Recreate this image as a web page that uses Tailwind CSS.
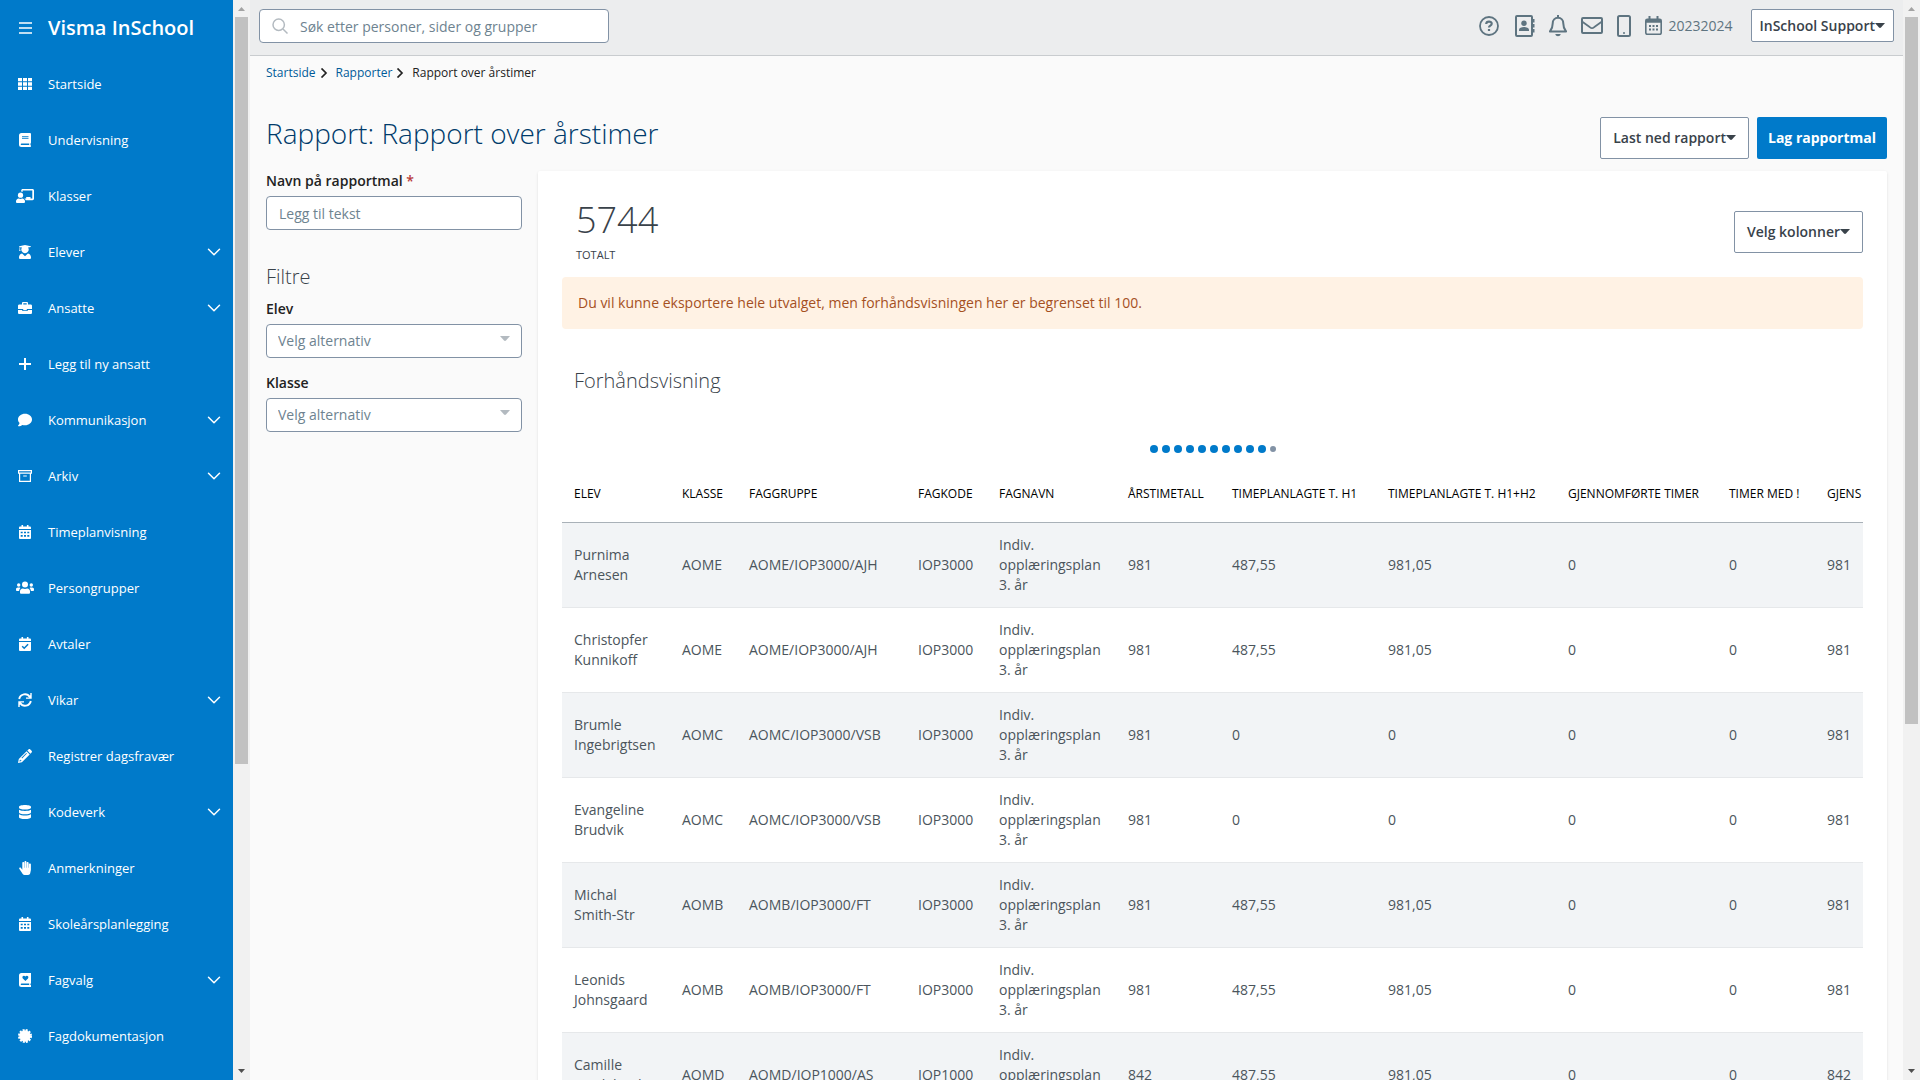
<!DOCTYPE html>
<html lang="nb">
<head>
    <meta charset="UTF-8">
    <meta name="viewport" content="width=device-width, initial-scale=1.0">
    <title>Rapport over årstimer - Visma InSchool</title>
    <script src="https://cdn.jsdelivr.net/npm/@tailwindcss/browser@4"></script>
</head>
<body class="h-screen overflow-hidden flex bg-[#fafafa] font-['Open_Sans',sans-serif] text-sm text-[#39424a]">

    <!-- Ikoner -->
    <svg class="hidden">
        <symbol id="grid" viewBox="0 0 14 14"><path d="M0 1h4v3.3H0zM5 1h4v3.3H5zM10 1h4v3.3h-4zM0 5.3h4v3.4H0zM5 5.3h4v3.4H5zM10 5.3h4v3.4h-4zM0 9.7h4V13H0zM5 9.7h4V13H5zM10 9.7h4V13h-4z"/></symbol>
        <symbol id="book" viewBox="0 0 14 14"><path fill-rule="evenodd" d="M3.5 0H12a1 1 0 0 1 1 1v8.500c0 .4-.2.700-.5.900-.1.500-.1 1.200 0 1.700.3.300.5.500.5.900 0 .6-.4 1-1 1H3.500A2.500 2.500 0 0 1 1 11.500v-9A2.500 2.500 0 0 1 3.500 0zM4 3.300v.9h6.500v-.9zM4 5.200v.9h6.500v-.9zM3.500 10.400c-1 0-1 1.700 0 1.700h7.700v-1.700z"/></symbol>
        <symbol id="teacher" viewBox="0 0 18 14"><path d="M16.500 0H6.700C5.900 0 5.200.7 5.200 1.500v1c.5.1 1 .3 1.400.600V1.500h9.700v8.100h-1.800V8h-4.300v1.600H8.300c.7.400 1.200 1 1.500 1.600h6.700c.8 0 1.500-.7 1.500-1.600V1.500C18 .7 17.300 0 16.500 0z"/><circle cx="4.500" cy="6.200" r="2.600"/><path d="M6.300 9.600c-1.200.4-2.400.4-3.600 0C1.200 9.700 0 10.900 0 12.500v.6c0 .5.4.9.900.900h7.200c.5 0 .9-.4.900-.9v-.6c0-1.600-1.200-2.800-2.700-2.900z"/></symbol>
        <symbol id="student" viewBox="0 0 14 14"><path d="M7 0 1.300 1.200c-.4.100-.4.700 0 .8l.3.100V3.600c-.3.200-.3.600 0 .8L1.100 6h1.500l-.5-1.600c.3-.2.300-.6 0-.8V2.200L4 2.600a3.600 3.600 0 1 0 6 0l2.700-.600c.4-.1.400-.7 0-.8zM9.900 8.600 7 11.200 4.100 8.600C2.400 9 1 10.500 1 12.300v.4c0 .7.600 1.300 1.300 1.300h9.400c.7 0 1.300-.6 1.300-1.300v-.4c0-1.800-1.400-3.300-3.100-3.700z"/></symbol>
        <symbol id="briefcase" viewBox="0 0 14 14"><path fill-rule="evenodd" d="M5.200 1C4.500 1 4 1.500 4 2.200v1.300H1.300C.6 3.500 0 4.100 0 4.800V8h5.200v1.200h3.600V8H14V4.800c0-.7-.6-1.300-1.300-1.300H10V2.200C10 1.500 9.500 1 8.800 1zm.1 1.300h3.400v1.200H5.300z"/><path d="M0 8.900v2.800c0 .7.600 1.300 1.300 1.300h11.400c.7 0 1.300-.6 1.300-1.300V8.900H9.700v1.200H4.300V8.900z"/></symbol>
        <symbol id="plus" viewBox="0 0 14 14"><path d="M6 1h2v5h5v2H8v5H6V8H1V6h5z"/></symbol>
        <symbol id="comment" viewBox="0 0 14 14"><path d="M7 .8c-3.900 0-7 2.600-7 5.700 0 1.400.6 2.600 1.600 3.600-.3 1.100-1 1.900-1.500 2.500-.2.200 0 .6.300.6 1.700 0 3-.7 3.900-1.300.8.300 1.700.4 2.700.4 3.900 0 7-2.600 7-5.800S10.900.8 7 .8z"/></symbol>
        <symbol id="archive" viewBox="0 0 14 14"><path fill="none" stroke="currentColor" stroke-width="1.200" d="M.6 1.600h12.800v2.600H.6zM1.600 4.200h10.800v8.200H1.600zM5.200 7h3.600"/></symbol>
        <symbol id="calendar" viewBox="0 0 14 14"><path d="M1 4V2.700c0-.6.5-1.100 1.200-1.100h1.300V0h1.600v1.600h3.800V0h1.600v1.600h1.300c.7 0 1.200.5 1.200 1.100V4z"/><path fill-rule="evenodd" d="M1 4.900h12v7.800c0 .7-.5 1.300-1.200 1.300H2.200C1.500 14 1 13.400 1 12.700zM2.700 6.700v1.600h2V6.700zm3.300 0v1.600h2V6.700zm3.300 0v1.600h2V6.700zM2.700 10v1.700h2V10zM6 10v1.700h2V10zm3.300 0v1.700h2V10z"/></symbol>
        <symbol id="check" viewBox="0 0 14 14"><path d="M1 4V2.700c0-.6.500-1.100 1.200-1.100h1.300V0h1.600v1.600h3.800V0h1.600v1.600h1.300c.7 0 1.200.5 1.200 1.100V4zM1 4.900h12v7.800c0 .7-.5 1.300-1.200 1.300H2.200C1.500 14 1 13.400 1 12.700z"/><path fill="none" stroke="#007aca" stroke-width="1.500" d="m4.200 9.300 2 2 3.900-4"/></symbol>
        <symbol id="users" viewBox="0 0 18 14"><circle cx="9" cy="3.500" r="3"/><circle cx="2.700" cy="4" r="1.700"/><circle cx="15.300" cy="4" r="1.700"/><path d="M11.200 7.500c-1.400.6-3 .6-4.400 0C5 7.500 4 8.900 4 10.500v1c0 .8.500 1.300 1.300 1.300h7.400c.8 0 1.300-.5 1.300-1.300v-1c0-1.600-1-3-2.800-3zM4.400 7c-.4-.3-.7-.4-1.100-.4H1.800C.8 6.600 0 7.400 0 8.400v.9c0 .5.400.7.900.7h2.200c.1-1.200.6-2.200 1.300-3zM13.600 7c.4-.3.700-.4 1.100-.4h1.500c1 0 1.800.8 1.800 1.800v.9c0 .5-.4.700-.9.700h-2.200c-.1-1.200-.6-2.200-1.300-3z"/></symbol>
        <symbol id="sync" viewBox="0 0 14 14"><path fill="none" stroke="currentColor" stroke-width="1.900" d="M1.200 6A5.800 5.800 0 0 1 11.800 4M12.800 8A5.800 5.800 0 0 1 2.200 10"/><path d="M13.700 0v5.700H8V4.500h3L12.300 2V0zM.3 14V8.300H6v1.200H3L1.700 12v2z"/></symbol>
        <symbol id="pencil" viewBox="0 0 14 14"><path fill-rule="evenodd" d="m8.600 2.300 3.100 3.100-7.800 7.800L0 14l.8-3.900zM8.300 4 3.500 8.800l.6.600 4.800-4.800zM1.900 10.700l-.5 1.900 1.900-.5v-.9h-.9v-.5z"/><path d="m9.300 1.600 1.200-1.200c.5-.5 1.300-.5 1.800 0l1.300 1.300c.5.500.5 1.300 0 1.800l-1.200 1.200z"/></symbol>
        <symbol id="database" viewBox="0 0 14 14"><path d="M1 1.800C1 .8 3.700 0 7 0s6 .8 6 1.800v1C13 3.800 10.300 4.600 7 4.600S1 3.800 1 2.800zM1 4.700c1.300.8 3.600 1.200 6 1.200s4.700-.4 6-1.200v2.700c0 1-2.700 1.800-6 1.800S1 8.400 1 7.400zM1 9.300c1.300.9 3.600 1.200 6 1.200s4.700-.3 6-1.200v2.900c0 1-2.700 1.800-6 1.800s-6-.8-6-1.800z"/></symbol>
        <symbol id="hand" viewBox="0 0 14 14"><path d="M11.900 2.600c-.6 0-1 .4-1 1V6.700h-.3V1.900c0-1.300-1.900-1.300-1.900 0v4.800h-.3V1c0-1.300-1.900-1.300-1.900 0v5.700h-.3V1.900c0-1.300-1.900-1.300-1.900 0v6.800L3 7C2.200 5.900.6 7 1.400 8.100l3.300 4.900c.5.700 1.100 1 1.900 1h3.500c1 0 1.900-.7 2.100-1.700l.7-3.300V3.600c0-.6-.4-1-1-1z"/></symbol>
        <symbol id="heartbook" viewBox="0 0 14 14"><path fill-rule="evenodd" d="M3.500 0H13v10.400h-.6v1.700h.6V14H3.500A2.500 2.500 0 0 1 1 11.500v-9A2.500 2.500 0 0 1 3.500 0zM7.400 8 4.800 5.400C3.500 3.800 5.700 1.700 7.400 3.500c1.700-1.800 3.900.3 2.600 1.900zM3.500 10.400c-1 0-1 1.700 0 1.700h7.700v-1.700z"/></symbol>
        <symbol id="badge" viewBox="0 0 14 14"><circle cx="7" cy="7" r="5.700"/><circle cx="7" cy="7" r="6" fill="none" stroke="currentColor" stroke-width="2" stroke-dasharray="2 1.140"/></symbol>
        <symbol id="chevron" viewBox="0 0 14 8"><path fill="none" stroke="currentColor" stroke-width="1.500" stroke-linecap="round" stroke-linejoin="round" d="m1.500 1.200 5.500 5.500 5.500-5.500"/></symbol>
        <symbol id="caret" viewBox="0 0 10 6"><path d="M0 0h10L6 4.600q-1 .9-2 0z"/></symbol>
        <symbol id="arrow" viewBox="0 0 8 10"><path fill="none" stroke="#222" stroke-width="1.700" d="m1.500 .5 4.500 4.500-4.500 4.500"/></symbol>
    </svg>

    <!-- Venstremeny -->
    <aside class="w-[233px] shrink-0 bg-[#007aca] text-white">
        <div class="h-14 pl-[19px] flex items-center gap-4">
            <button type="button" aria-label="Meny"><svg class="w-[13px] h-3" viewBox="0 0 13 12"><path stroke="#fff" stroke-width="1.500" d="M0 1h13M0 6h13M0 11h13"/></svg></button>
            <span class="text-xl font-semibold">Visma InSchool</span>
        </div>
        <nav id="meny"></nav>
    </aside>

    <!-- Rullefelt for menyen -->
    <div class="w-[17px] shrink-0 bg-[#f1f1f1] flex flex-col items-center">
        <svg class="w-[17px] h-[17px] shrink-0" viewBox="0 0 17 17"><path fill="#a3a3a3" d="m8.500 7 3.500 4H5z"/></svg>
        <div class="w-[13px] h-[747px] bg-[#c1c1c1]"></div>
        <svg class="w-[17px] h-[17px] mt-auto shrink-0" viewBox="0 0 17 17"><path fill="#505050" d="M5 6h7l-3.500 4z"/></svg>
    </div>

    <div class="flex-1 min-w-0 flex flex-col">
        <!-- Topplinje -->
        <header class="h-14 shrink-0 flex items-start justify-between pl-[9px] pr-[9px] pt-[9px] bg-[#ecedee] border-b border-[#c9cccf]">
            <label class="w-[350px] h-[34px] flex items-center gap-3 pl-3 bg-white border border-[#8292a5] rounded">
                <svg class="w-4 h-4" viewBox="0 0 16 16" fill="none" stroke="#b3bac0" stroke-width="1.500"><circle cx="6.700" cy="6.700" r="5.700"/><path d="m11 11 4.500 4.500"/></svg>
                <input type="text" aria-label="Søk" placeholder="Søk etter personer, sider og grupper" class="flex-1 pt-0.5 outline-none placeholder:text-[#6e8390]">
            </label>
            <div class="flex items-center gap-3.5 text-[#5e7480]">
                <button type="button" aria-label="Hjelp" class="mr-0.5"><svg class="w-5 h-5" viewBox="0 0 20 20" fill="none" stroke="currentColor" stroke-width="1.800"><circle cx="10" cy="10" r="9"/><path stroke-width="2.200" d="M7.200 8c.2-3.300 5.600-3 5.500-.2 0 1.900-2.700 1.800-2.700 3.700M10 13v2"/></svg></button>
                <button type="button" aria-label="Kontakter"><svg class="w-5 h-[22px]" viewBox="0 0 20 22"><path fill="none" stroke="currentColor" stroke-width="2" d="M2 1h14a1 1 0 0 1 1 1v18a1 1 0 0 1-1 1H2a1 1 0 0 1-1-1V2a1 1 0 0 1 1-1z"/><circle cx="9" cy="8.300" r="2.700" fill="currentColor"/><path fill="currentColor" d="M4 16v-1.300c0-3.600 10-3.600 10 0V16zM18 4h1.500v3.500H18zm0 5h1.500v3.500H18zm0 5h1.500v3.500H18z"/></svg></button>
                <button type="button" aria-label="Varsler"><svg class="w-[18px] h-[22px]" viewBox="0 0 18 22" fill="none" stroke="currentColor" stroke-width="2" stroke-linejoin="round"><path d="M9 0v3M9 2.800c-3.200 0-5.300 2.500-5.300 5.600 0 4.400-1.400 6-2.800 8.100h16.200c-1.400-2.100-2.800-3.700-2.800-8.100 0-3.100-2.100-5.600-5.300-5.600z"/><path fill="currentColor" stroke="none" d="M6.300 19h5.400c-.4 3-5 3-5.400 0z"/></svg></button>
                <button type="button" aria-label="Meldinger"><svg class="w-[22px] h-[17px]" viewBox="0 0 22 17" fill="none" stroke="currentColor" stroke-width="2" stroke-linejoin="round"><rect x="1" y="1" width="20" height="15" rx="1"/><path stroke-width="1.700" d="m1 4.500 8 5.800c1.300 1 2.700 1 4 0l8-5.800"/></svg></button>
                <button type="button" aria-label="Mobil"><svg class="w-[14px] h-[22px]" viewBox="0 0 14 22"><rect x="1" y="1" width="12" height="20" rx="1.500" fill="none" stroke="currentColor" stroke-width="2"/><circle cx="7" cy="18" r="1" fill="currentColor"/></svg></button>
                <button type="button" class="flex items-center gap-1.5 mr-1">
                    <svg class="w-[17px] h-[19px]" viewBox="0 0 17 19"><rect x=".8" y="3.300" width="15.400" height="15" rx="1.500" fill="none" stroke="currentColor" stroke-width="1.600"/><path fill="currentColor" d="M1 3h2.500V0h2v3h6V0h2v3H16v3.700H1zM4 9h2v2H4zm3.500 0h2v2h-2zM11 9h2v2h-2zM4 12.500h2v2H4zm3.500 0h2v2h-2zm3.500 0h2v2h-2z"/></svg>
                    <span>20232024</span>
                </button>
                <button type="button" class="h-[33px] px-2 flex items-center bg-white border border-[#8292a5] rounded-xs font-semibold text-[#39424a]">InSchool Support<svg class="w-2.5 h-1.5 fill-current"><use href="#caret"/></svg></button>
            </div>
        </header>

        <main class="px-4">
            <nav aria-label="Brødsmuler" class="h-[34px] flex items-center text-xs">
                <a href="#" class="text-[#005b99]">Startside</a>
                <svg class="w-2 h-2.5 ml-1 mr-2"><use href="#arrow"/></svg>
                <a href="#" class="text-[#005b99]">Rapporter</a>
                <svg class="w-2 h-2.5 ml-1 mr-2"><use href="#arrow"/></svg>
                <span class="text-[#222]">Rapport over årstimer</span>
            </nav>

            <div class="h-[81px] pt-[14px] flex items-center justify-between">
                <h1 class="text-[28px] leading-8 pb-2.5 font-light text-[#003b6b]">Rapport: Rapport over årstimer</h1>
                <div class="flex gap-2">
                    <button type="button" class="h-[42px] px-3 flex items-center bg-white border border-[#8292a5] rounded-xs font-semibold">Last ned rapport<svg class="w-2.5 h-1.5 fill-current"><use href="#caret"/></svg></button>
                    <button type="button" class="h-[42px] px-[11px] bg-[#007aca] rounded-xs font-bold text-white">Lag rapportmal</button>
                </div>
            </div>

            <div class="flex items-start gap-4">
                <!-- Filtre -->
                <form class="w-64 shrink-0 text-[#222]">
                    <label for="navn" class="block h-[25px] leading-5 font-semibold">Navn på rapportmal <span class="text-[#b83a3a]">*</span></label>
                    <input id="navn" type="text" placeholder="Legg til tekst" class="block w-full h-[34px] px-3 bg-white border border-[#8292a5] rounded placeholder:text-[#6e8390]">
                    <h2 class="mt-[33px] mb-2 text-xl font-light text-[#39424a]">Filtre</h2>
                    <label for="elev" class="block h-[25px] leading-5 font-semibold">Elev</label>
                    <div class="relative">
                        <select id="elev" class="appearance-none w-full h-[34px] px-[11px] bg-white border border-[#8292a5] rounded text-[#6e8390]"><option>Velg alternativ</option></select>
                        <svg class="absolute right-3 top-3 w-2.5 h-1.5 fill-[#b3bac0] pointer-events-none"><use href="#caret"/></svg>
                    </div>
                    <label for="klasse" class="block h-[25px] mt-[15px] leading-5 font-semibold">Klasse</label>
                    <div class="relative">
                        <select id="klasse" class="appearance-none w-full h-[34px] px-[11px] bg-white border border-[#8292a5] rounded text-[#6e8390]"><option>Velg alternativ</option></select>
                        <svg class="absolute right-3 top-3 w-2.5 h-1.5 fill-[#b3bac0] pointer-events-none"><use href="#caret"/></svg>
                    </div>
                </form>

                <!-- Rapporten -->
                <section class="flex-1 min-w-0 px-6 pt-6 bg-white rounded-xs shadow">
                    <div class="h-[82px] pl-[14px] flex justify-between">
                        <div>
                            <div class="text-4xl leading-[50px] font-light">5744</div>
                            <div class="text-[11px] leading-5 text-[#39424a]">TOTALT</div>
                        </div>
                        <button type="button" class="h-[42px] mt-4 px-3 flex items-center bg-white border border-[#8292a5] rounded-xs font-semibold">Velg kolonner<svg class="w-2.5 h-1.5 fill-current"><use href="#caret"/></svg></button>
                    </div>
                    <p class="h-[52px] px-4 leading-[52px] bg-[#fff2e4] rounded text-[#a5501f]">Du vil kunne eksportere hele utvalget, men forhåndsvisningen her er begrenset til 100.</p>
                    <h2 class="mt-9 px-3 text-xl leading-8 font-light">Forhåndsvisning</h2>

                    <div class="h-[69px] pt-[34px] flex items-center justify-center gap-1" role="status" aria-label="Laster">
                        <i class="w-2 h-2 rounded-full bg-[#007aca]"></i>
                        <i class="w-2 h-2 rounded-full bg-[#007aca]"></i>
                        <i class="w-2 h-2 rounded-full bg-[#007aca]"></i>
                        <i class="w-2 h-2 rounded-full bg-[#007aca]"></i>
                        <i class="w-2 h-2 rounded-full bg-[#007aca]"></i>
                        <i class="w-2 h-2 rounded-full bg-[#007aca]"></i>
                        <i class="w-2 h-2 rounded-full bg-[#007aca]"></i>
                        <i class="w-2 h-2 rounded-full bg-[#007aca]"></i>
                        <i class="w-2 h-2 rounded-full bg-[#007aca]"></i>
                        <i class="w-2 h-2 rounded-full bg-[#007aca]"></i>
                        <i class="w-1.5 h-1.5 rounded-full bg-[#8292a5]"></i>
                    </div>

                    <div class="overflow-hidden">
                        <table class="table-fixed w-[1420px] text-left">
                            <colgroup>
                                <col class="w-[108px]"><col class="w-[67px]"><col class="w-[169px]"><col class="w-[81px]"><col class="w-[129px]"><col class="w-[104px]"><col class="w-[156px]"><col class="w-[180px]"><col class="w-[161px]"><col class="w-[98px]"><col>
                            </colgroup>
                            <thead>
                                <tr class="h-[56px] border-b border-[#a9b1b8] text-xs text-black whitespace-nowrap">
                                    <th class="pl-3 font-medium">ELEV</th>
                                    <th class="pl-3 font-medium">KLASSE</th>
                                    <th class="pl-3 font-medium">FAGGRUPPE</th>
                                    <th class="pl-3 font-medium">FAGKODE</th>
                                    <th class="pl-3 font-medium">FAGNAVN</th>
                                    <th class="pl-3 font-medium">ÅRSTIMETALL</th>
                                    <th class="pl-3 font-medium">TIMEPLANLAGTE T. H1</th>
                                    <th class="pl-3 font-medium">TIMEPLANLAGTE T. H1+H2</th>
                                    <th class="pl-3 font-medium">GJENNOMFØRTE TIMER</th>
                                    <th class="pl-3 font-medium">TIMER MED !</th>
                                    <th class="pl-3 font-medium">GJENS</th>
                                </tr>
                            </thead>
                            <tbody id="rader"></tbody>
                        </table>
                    </div>
                </section>
            </div>
        </main>
    </div>

    <!-- Rullefelt for siden -->
    <div class="w-[17px] shrink-0 bg-[#f1f1f1] flex flex-col items-center">
        <svg class="w-[17px] h-[17px] shrink-0" viewBox="0 0 17 17"><path fill="#a3a3a3" d="m8.500 7 3.500 4H5z"/></svg>
        <div class="w-[13px] h-[707px] bg-[#c1c1c1]"></div>
        <svg class="w-[17px] h-[17px] mt-auto shrink-0" viewBox="0 0 17 17"><path fill="#505050" d="M5 6h7l-3.500 4z"/></svg>
    </div>

    <script>
        // [ikon, tekst, har undermeny]
        const meny = [
            ['grid', 'Startside'], ['book', 'Undervisning'], ['teacher', 'Klasser'],
            ['student', 'Elever', true], ['briefcase', 'Ansatte', true], ['plus', 'Legg til ny ansatt'],
            ['comment', 'Kommunikasjon', true], ['archive', 'Arkiv', true], ['calendar', 'Timeplanvisning'],
            ['users', 'Persongrupper'], ['check', 'Avtaler'], ['sync', 'Vikar', true],
            ['pencil', 'Registrer dagsfravær'], ['database', 'Kodeverk', true], ['hand', 'Anmerkninger'],
            ['calendar', 'Skoleårsplanlegging'], ['heartbook', 'Fagvalg', true], ['badge', 'Fagdokumentasjon'],
        ];
        document.getElementById('meny').innerHTML = meny.map(([ikon, tekst, under]) => `
            <a href="#" class="h-14 pl-4 pr-3 flex items-center text-[13px] font-medium">
                <svg class="w-[18px] h-[14px] mr-[14px] fill-current"><use href="#${ikon}"/></svg>
                <span class="flex-1">${tekst}</span>
                ${under ? '<svg class="w-3.5 h-2"><use href="#chevron"/></svg>' : ''}
            </a>`).join('');

        const ar3 = 'Indiv. opplæringsplan 3. år';
        const rader = [
            ['Purnima Arnesen', 'AOME', 'AOME/IOP3000/AJH', 'IOP3000', ar3, '981', '487,55', '981,05', '0', '0', '981'],
            ['Christopfer Kunnikoff', 'AOME', 'AOME/IOP3000/AJH', 'IOP3000', ar3, '981', '487,55', '981,05', '0', '0', '981'],
            ['Brumle Ingebrigtsen', 'AOMC', 'AOMC/IOP3000/VSB', 'IOP3000', ar3, '981', '0', '0', '0', '0', '981'],
            ['Evangeline Brudvik', 'AOMC', 'AOMC/IOP3000/VSB', 'IOP3000', ar3, '981', '0', '0', '0', '0', '981'],
            ['Michal<br>Smith-Str', 'AOMB', 'AOMB/IOP3000/FT', 'IOP3000', ar3, '981', '487,55', '981,05', '0', '0', '981'],
            ['Leonids Johnsgaard', 'AOMB', 'AOMB/IOP3000/FT', 'IOP3000', ar3, '981', '487,55', '981,05', '0', '0', '981'],
            ['Camille Bredeland', 'AOMD', 'AOMD/IOP1000/AS', 'IOP1000', 'Indiv. opplæringsplan 1. år', '842', '487,55', '981,05', '0', '0', '842'],
        ];
        document.getElementById('rader').innerHTML = rader.map(rad =>
            '<tr class="h-[85px] odd:bg-[#f2f4f6] border-b border-[#e6e8ea] leading-5">' +
            rad.map(celle => `<td class="pl-3 pr-2 text-[#4b555c]">${celle}</td>`).join('') + '</tr>').join('');
    </script>
</body>
</html>
